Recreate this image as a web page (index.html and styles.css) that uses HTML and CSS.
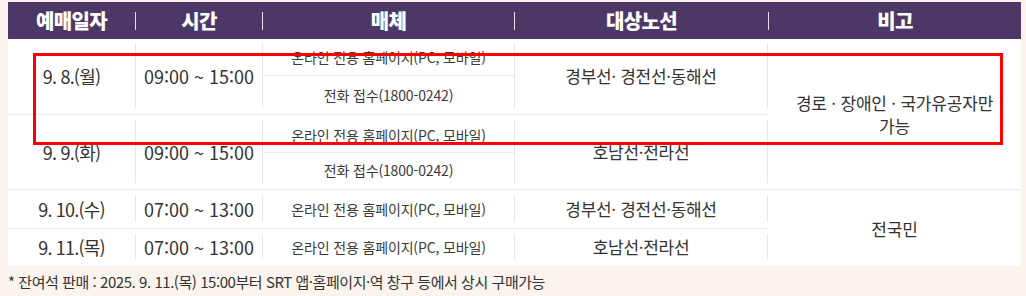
FILE: index.html
```html
<!DOCTYPE html>
<html lang="ko">
<head>
<meta charset="utf-8">
<title>예매 일정</title>
<link rel="stylesheet" href="styles.css">
</head>
<body>
<div class="page">
  <div class="table">
    <div class="thead">
      <div class="th c1">예매일자</div>
      <div class="th c2">시간</div>
      <div class="th c3">매체</div>
      <div class="th c4">대상노선</div>
      <div class="th c5">비고</div>
    </div>

    <div class="group g1">
      <div class="left">
        <div class="row r1 sep">
          <div class="cell c1 date">9. 8.(월)</div>
          <div class="cell c2 time">09:00 ~ 15:00</div>
          <div class="cell c3 media">
            <div class="sub sub-a">온라인 전용 홈페이지(PC, 모바일)</div>
            <div class="sub sub-b">전화 접수(1800-0242)</div>
          </div>
          <div class="cell c4 line">경부선· 경전선·동해선</div>
        </div>
        <div class="row r2">
          <div class="cell c1 date">9. 9.(화)</div>
          <div class="cell c2 time">09:00 ~ 15:00</div>
          <div class="cell c3 media">
            <div class="sub sub-a">온라인 전용 홈페이지(PC, 모바일)</div>
            <div class="sub sub-b">전화 접수(1800-0242)</div>
          </div>
          <div class="cell c4 line">호남선·전라선</div>
        </div>
      </div>
      <div class="note">경로 · 장애인 · 국가유공자만<br>가능</div>
    </div>

    <div class="group g2">
      <div class="left">
        <div class="row r3 sep">
          <div class="cell c1 date">9. 10.(수)</div>
          <div class="cell c2 time">07:00 ~ 13:00</div>
          <div class="cell c3 media single">온라인 전용 홈페이지(PC, 모바일)</div>
          <div class="cell c4 line">경부선· 경전선·동해선</div>
        </div>
        <div class="row r4">
          <div class="cell c1 date">9. 11.(목)</div>
          <div class="cell c2 time">07:00 ~ 13:00</div>
          <div class="cell c3 media single">온라인 전용 홈페이지(PC, 모바일)</div>
          <div class="cell c4 line">호남선·전라선</div>
        </div>
      </div>
      <div class="note">전국민</div>
    </div>
  </div>

  <p class="foot">* 잔여석 판매 : 2025. 9. 11.(목) 15:00부터 SRT 앱·홈페이지·역 창구 등에서 상시 구매가능</p>

  <div class="highlight"></div>
</div>
</body>
</html>
```

FILE: styles.css
```css
* { box-sizing: border-box; }

html, body {
  margin: 0;
  padding: 0;
  background: #fbf3ee;
}

body {
  font-family: "Noto Sans CJK KR", "Noto Sans", sans-serif;
  color: #333;
}

.page {
  position: relative;
  width: 1026px;
  height: 296px;
  padding: 2px 5px 0 8px;
}

.table {
  width: 1013px;
  background: #fff;
}

/* header */
.thead {
  display: flex;
  align-items: center;
  height: 37px;
  background: #4d3767;
}
.th {
  height: 18px;
  line-height: 18px;
  text-align: center;
  color: #fff;
  font-size: 20px;
  font-weight: 900;
  letter-spacing: -0.6px;
}
.th + .th { border-left: 1px solid rgba(255, 255, 255, 0.85); }

.c1 { width: 127px; }
.c2 { width: 127px; }
.c3 { width: 252px; }
.c4 { width: 254px; }
.th.c5 { width: 253px; }

/* body groups */
.group {
  display: flex;
}
.g1 { border-bottom: 1px solid #ececec; }

.left { width: 760px; }

.note {
  flex: 1;
  display: flex;
  align-items: center;
  justify-content: center;
  text-align: center;
  font-size: 17px;
  line-height: 23px;
  letter-spacing: -0.2px;
  color: #333;
}

.row {
  display: flex;
  padding: 5px 0 6px;
}
.row.sep { border-bottom: 1px solid #ececec; }
.r1 { padding-top: 4px; }
.r1 .cell { height: 65px; }
.r2 .cell { height: 63px; }
.r3 .cell { height: 27px; }
.r4 { padding-bottom: 7px; }
.r4 .cell { height: 25px; }

.cell {
  display: flex;
  align-items: center;
  justify-content: center;
  text-align: center;
}
.cell + .cell { border-left: 1px solid #e6e6e6; }
.cell.c4 { border-right: 1px solid #e6e6e6; }

.date {
  font-size: 18px;
  letter-spacing: -0.8px;
}
.time {
  font-size: 18px;
  letter-spacing: 0;
}
.line {
  font-size: 17px;
  letter-spacing: -0.3px;
}

.media {
  flex-direction: column;
  align-items: stretch;
  font-size: 14px;
  letter-spacing: -0.15px;
  color: #3a3a3a;
}
.media.single { justify-content: center; align-items: center; }

.sub {
  display: flex;
  align-items: center;
  justify-content: center;
}
.r1 .sub-a { height: 33px; padding-bottom: 5px; border-bottom: 1px solid #ececec; }
.r1 .sub-b { flex: 1; padding-top: 6px; }
.r2 .sub-a { height: 33px; padding-bottom: 3px; border-bottom: 1px solid #ececec; }
.r2 .sub-b { flex: 1; padding-top: 4px; }

.foot {
  margin: 6px 0 0;
  font-size: 15px;
  line-height: 20px;
  letter-spacing: -0.45px;
  color: #333;
}

/* annotation box drawn over the table */
.highlight {
  position: absolute;
  left: 33px;
  top: 53px;
  width: 970px;
  height: 92px;
  border: 3px solid #ff0000;
  pointer-events: none;
}
```
